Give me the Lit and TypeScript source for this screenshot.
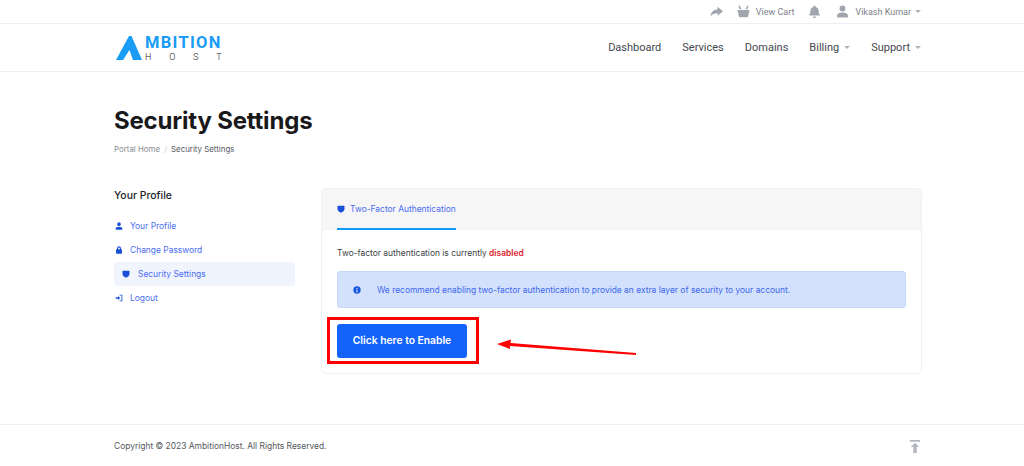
import { LitElement, html, css, svg } from "lit";
import { customElement } from "lit/decorators.js";

const icon = (d: string, size = 12, vb = "0 0 24 24") =>
  html`<svg class="ic" width=${size} height=${size} viewBox=${vb} fill="currentColor">${svg`<path d=${d}></path>`}</svg>`;

const USER = "M12 12a5.500 5.500 0 1 0 0-11 5.500 5.500 0 0 0 0 11zm0 2c-5 0-10 2.200-10 5.500V23h20v-3.500C22 16.200 17 14 12 14z";
const LOCK = "M6 10V7a6 6 0 0 1 12 0v3h1a2 2 0 0 1 2 2v9a2 2 0 0 1-2 2H5a2 2 0 0 1-2-2v-9a2 2 0 0 1 2-2zm3.500 0h5V7a2.500 2.500 0 0 0-5 0z";
const SHIELD = "M3 2h18a1.500 1.500 0 0 1 1.500 1.500V12c0 5-5 9-10.500 11C6.500 21 1.500 17 1.500 12V3.500A1.500 1.500 0 0 1 3 2z";
const LOGOUT = "M14 2h7a1 1 0 0 1 1 1v18a1 1 0 0 1-1 1h-7v-2.500h5.500v-15H14zM9 6l6.500 6L9 18v-4H2v-4h7z";
const INFO = "M12 1a11 11 0 1 0 0 22 11 11 0 0 0 0-22zm0 4.500a2 2 0 1 1 0 4 2 2 0 0 1 0-4zM9.500 11h4v6H15v2H9v-2h1.500v-4h-1z";
const SHARE = "M14 3l10 8.500L14 20v-5c-6 0-10 1.500-13 6 .5-7 5-12 13-13z";
const BASKET = "M1 9h22l-2.500 12a2 2 0 0 1-2 1.500h-13a2 2 0 0 1-2-1.500zM5 8L2.500 2l2.500-1L8.500 8zM19 8l2.500-6-2.500-1-3.500 7z";
const BELL = "M12 1a2 2 0 0 1 2 2v.6c3.500.8 5.500 3.500 5.500 7.400 0 4 1 5.500 2.500 7v1.500H2V18c1.500-1.500 2.500-3 2.500-7 0-3.900 2-6.600 5.500-7.400V3a2 2 0 0 1 2-2zM9 21h6a3 3 0 0 1-6 0z";

@customElement("app-root")
export class AppRoot extends LitElement {
  static styles = css`
    :host { display: block; width: 1024px; height: 466px; overflow: hidden; background: #fff; font-family: Inter, "Liberation Sans", sans-serif; color: #1d1d1f; position: relative; }
    .wrap { width: 808px; margin-left: 114px; box-sizing: border-box; }
    .ic { display: block; flex: none; }
    .top { height: 23px; border-bottom: 1px solid #eeeff2; }
    .top .wrap { height: 23px; padding-right: 1px; display: flex; justify-content: flex-end; align-items: center; color: #a1a5ae; font: 9px Roboto, sans-serif; }
    .top .cart { display: flex; align-items: center; gap: 6px; margin-left: 14px; color: #7d818a; }
    .top .bell { margin-left: 14px; }
    .top .usr { display: flex; align-items: center; gap: 6px; margin-left: 15px; color: #7d818a; }
    .top .usr .caret { margin-left: -2px; }
    .gray { color: #a1a5ae; }
    .caret { width: 0; height: 0; border: 3px solid transparent; border-top: 3px solid #b0b3ba; border-bottom: 0; display: inline-block; }
    .nav { height: 47px; border-bottom: 1px solid #eeeff2; }
    .nav .wrap { height: 47px; padding-right: 1px; display: flex; justify-content: space-between; align-items: center; }
    .logo { display: flex; align-items: flex-start; height: 24px; margin: 0 0 0 2px; }
    .logo-text { display: flex; flex-direction: column; margin-left: 3px; }
    .mb { font: 700 16.500px/13px Roboto, sans-serif; color: #1a9bf5; letter-spacing: 1.300px; }
    .hs { font: 300 9px/10px Roboto, sans-serif; color: #222; letter-spacing: 17.800px; white-space: nowrap; margin-top: 3px; }
    .links { display: flex; align-items: center; gap: 21px; font: 400 11px Roboto, sans-serif; color: #44474e; }
    .links span.l { display: flex; align-items: center; gap: 5px; }
    .head { padding-top: 32px; height: 116px; box-sizing: border-box; }
    h1 { margin: 0; font: 700 24px/34px Inter, sans-serif; color: #19191b; letter-spacing: -.2px; }
    .crumb { font-size: 7.900px; line-height: 12px; margin-top: 5px; color: #8a8d94; display: flex; gap: 4px; }
    .crumb b { font-weight: 400; color: #55585e; }
    .crumb i { font-style: normal; color: #c5c7cb; }
    .cols { display: flex; align-items: flex-start; }
    .side { width: 181px; margin-right: 26px; padding-top: 1px; }
    .side h3 { margin: 0 0 12px; font: 500 10.450px/13px Inter, sans-serif; color: #1d1d1f; }
    .menu { display: flex; flex-direction: column; }
    .item { height: 24px; display: flex; align-items: center; gap: 7px; padding-left: 1px; font-size: 8.440px; color: #4a6cf0; box-sizing: border-box; }
    .item .ic { color: #1a4fd8; }
    .item.active { background: #f0f5fd; border-radius: 3px; padding-left: 8px; gap: 8px; color: #4a6cf0; }
    .card { width: 601px; height: 186px; box-sizing: border-box; border: 1px solid #eef0f2; border-radius: 5px; }
    .tabs { height: 40px; background: #f6f6f7; border-bottom: 1px solid #eef0f2; padding-left: 15px; border-radius: 5px 5px 0 0; }
    .tab { display: inline-flex; align-items: center; gap: 5px; height: 41px; box-sizing: border-box; border-bottom: 2px solid #0d9bf5; font-size: 8.440px; color: #4a6cf0; padding-top: 1px; width: 119px; white-space: nowrap; }
    .tab .ic { color: #1a4fd8; }
    .body { padding: 16px 15px 0; }
    .msg { font-size: 8.440px; line-height: 14px; color: #3c3f45; }
    .msg strong { color: #dc2430; font-weight: 600; }
    .alert { margin-top: 11px; height: 37px; background: #d3e1fc; border: 1px solid #c6d8f8; border-radius: 3px; display: flex; align-items: center; box-sizing: border-box; padding-left: 15px; gap: 16px; font-size: 8.440px; color: #3d68ee; }
    .alert .ic { color: #1a55e0; }
    .btnbox { margin: 9px 0 0 -10px; width: 152px; height: 47px; box-sizing: border-box; border: 3px solid #f00; display: flex; align-items: center; padding-left: 7px; }
    .btn { width: 130px; height: 34px; background: #1464fb; border-radius: 3px; color: #fff; font: 600 10.300px/32px Inter, sans-serif; text-align: center; }
    .arrow { position: absolute; left: 495px; top: 336px; }
    .foot { position: absolute; left: 0; right: 0; top: 424px; border-top: 1px solid #eeeff2; }
    .foot .wrap { height: 41px; padding-right: 1px; display: flex; justify-content: space-between; align-items: center; font-size: 8.440px; color: #55585e; }
    .up { color: #b3b7c0; margin-top: 1px; }
  `;

  render() {
    return html`
      <div class="top"><div class="wrap">
        ${icon(SHARE, 13)}
        <div class="cart"><span class="gray">${icon(BASKET, 13)}</span>View Cart</div>
        <span class="bell">${icon(BELL, 13)}</span>
        <div class="usr"><span class="gray">${icon(USER, 13)}</span>Vikash Kumar <i class="caret"></i></div>
      </div></div>
      <div class="nav"><div class="wrap">
        <div class="logo">
          <svg width="26" height="24" viewBox="0 0 26 24"><path fill="#1a9bf5" d="M0 24 L13 0 H15.500 L26 24 H17 L13.500 14 L7 24Z"></path></svg>
          <div class="logo-text"><span class="mb">MBITION</span><span class="hs">HOST</span></div>
        </div>
        <div class="links">
          <span class="l">Dashboard</span><span class="l">Services</span><span class="l">Domains</span>
          <span class="l">Billing <i class="caret"></i></span><span class="l">Support <i class="caret"></i></span>
        </div>
      </div></div>
      <div class="wrap">
        <div class="head">
          <h1>Security Settings</h1>
          <div class="crumb"><span>Portal Home</span><i>/</i><b>Security Settings</b></div>
        </div>
        <div class="cols">
          <div class="side">
            <h3>Your Profile</h3>
            <div class="menu">
              <div class="item">${icon(USER, 8)}Your Profile</div>
              <div class="item">${icon(LOCK, 8)}Change Password</div>
              <div class="item active">${icon(SHIELD, 8)}Security Settings</div>
              <div class="item">${icon(LOGOUT, 8)}Logout</div>
            </div>
          </div>
          <div class="card">
            <div class="tabs"><div class="tab">${icon(SHIELD, 8)}Two-Factor Authentication</div></div>
            <div class="body">
              <div class="msg">Two-factor authentication is currently <strong>disabled</strong></div>
              <div class="alert">${icon(INFO, 8)}We recommend enabling two-factor authentication to provide an extra layer of security to your account.</div>
              <div class="btnbox"><div class="btn">Click here to Enable</div></div>
            </div>
          </div>
        </div>
      </div>
      <svg class="arrow" width="144" height="22" viewBox="0 0 144 22"><path fill="#f00" d="M2 8 L16 3.500 L15.500 7 L141 17 L141 19 L15 10 L15 13Z"></path></svg>
      <div class="foot"><div class="wrap">
        <span>Copyright © 2023 AmbitionHost. All Rights Reserved.</span>
        <svg class="up" width="12" height="13" viewBox="0 0 14 15" fill="currentColor"><path d="M1 0h12v2H1zM7 3l5 5H9v7H5V8H2z"></path></svg>
      </div></div>
    `;
  }
}
